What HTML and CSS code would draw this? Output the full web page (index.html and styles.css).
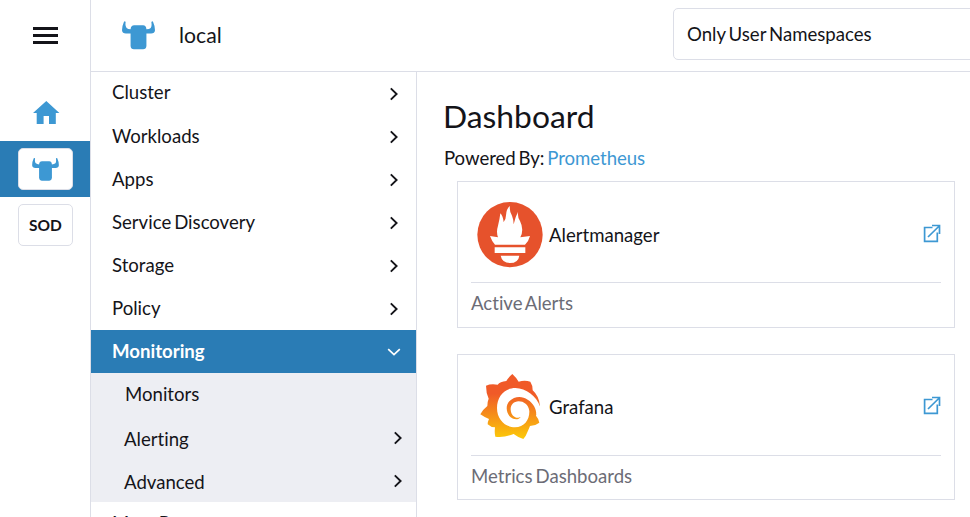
FILE: index.html
```html
<!DOCTYPE html>
<html lang="en">
<head>
<meta charset="utf-8">
<title>Monitoring</title>
<link rel="stylesheet" href="styles.css">
</head>
<body>
<svg class="defs" width="0" height="0">
  <symbol id="bull" viewBox="0 0 100 86"><path d="M26 37H12Q1 37 0 27Q0 14 6 1Q10 -2 11 3Q9 15 14 20Q18 24 26 24Q27 12 37 12H64Q73 12 74 24Q83 24 87 20Q91 15 89 3Q91 -2 94 1Q100 14 100 27Q99 37 88 37H74V75Q73 85 64 85H36Q27 85 26 75Z"/></symbol>
  <symbol id="right" viewBox="0 0 12 14"><path d="M2.8 1.4 8.6 7 2.8 12.6"/></symbol>
  <symbol id="down" viewBox="0 0 14 10"><path d="M1.2 2.2 7 7.7 12.8 2.2"/></symbol>
  <symbol id="external" viewBox="0 0 18 19"><path d="M9.5 3.5H1.6V17.4H14.3V8.5M9 1.5H16.5V10M16.2 2 5 13"/></symbol>
</svg>
<div class="app">
  <aside class="rail">
    <div class="burger"><i></i><i></i><i></i></div>
    <svg class="home" viewBox="0 0 27 24"><path d="M13.3 0 26.4 12H22.8V23H16V15H10.6V23H3.7V12H0Z"/></svg>
    <div class="active"><div class="box"><svg class="minibull"><use href="#bull"/></svg></div></div>
    <div class="box sod">SOD</div>
  </aside>
  <div class="body">
    <header class="top">
      <svg class="bull"><use href="#bull"/></svg>
      <span class="name">local</span>
      <div class="select">Only User Namespaces</div>
    </header>
    <div class="columns">
      <nav class="nav">
        <div class="row first"><span>Cluster</span><svg class="chev"><use href="#right"/></svg></div>
        <div class="row"><span>Workloads</span><svg class="chev"><use href="#right"/></svg></div>
        <div class="row"><span>Apps</span><svg class="chev"><use href="#right"/></svg></div>
        <div class="row"><span>Service Discovery</span><svg class="chev"><use href="#right"/></svg></div>
        <div class="row"><span>Storage</span><svg class="chev"><use href="#right"/></svg></div>
        <div class="row"><span>Policy</span><svg class="chev"><use href="#right"/></svg></div>
        <div class="row open"><span>Monitoring</span><svg class="chev-down"><use href="#down"/></svg></div>
        <div class="row sub leaf"><span>Monitors</span></div>
        <div class="row sub"><span>Alerting</span><svg class="chev"><use href="#right"/></svg></div>
        <div class="row sub"><span>Advanced</span><svg class="chev"><use href="#right"/></svg></div>
        <div class="row"><span>More Resources</span><svg class="chev"><use href="#right"/></svg></div>
      </nav>
      <main class="main">
        <h1>Dashboard</h1>
        <p class="powered">Powered By: <a>Prometheus</a></p>
        <section class="card">
          <div class="head">
            <svg class="logo prom" viewBox="21 31 198 201"><circle cx="120" cy="132" r="98" fill="#e6522c"/><g fill="#fff"><path d="M75 162Q66 153 60 136L84 140Q78 124 84 105Q89 86 91 68Q99 76 101 94Q108 86 108 74Q109 54 120 46Q117 60 126 75Q131 87 131 101Q136 78 144 63Q142 78 150 91Q163 117 151 140L180 136Q176 152 165 162Z"/><path d="M74 170H166V187H74ZM92 195H148Q145 217 120 217Q96 216 92 195Z"/></g></svg>
            <span class="title">Alertmanager</span><svg class="ext"><use href="#external"/></svg>
          </div>
          <div class="foot">Active Alerts</div>
        </section>
        <section class="card second">
          <div class="head">
            <svg class="logo graf" viewBox="21 25 198 201"><defs><linearGradient id="flame" x1="0" y1="225" x2="0" y2="28" gradientUnits="userSpaceOnUse"><stop offset="0" stop-color="#fccc08"/><stop offset=".7" stop-color="#f05a28"/></linearGradient></defs><path fill="url(#flame)" d="M127 28Q139 39 146 51Q164 46 181 51Q188 61 188 77Q207 94 210 124L199 149L198 153Q206 162 208 174Q197 183 180 184Q176 194 172 203Q168 215 160 223Q142 217 131 208Q105 219 76 216Q73 207 75 188Q62 188 53 179Q53 171 57 163Q42 157 31 149Q39 134 52 124Q52 111 56 102Q48 84 48 63Q63 56 83 60Q90 51 109 49Q116 37 127 28Z"/><path fill="#fff" d="M210 125C200 95 168 70 136 70C103 70 81 97 81 130C81 165 106 188 135 188C163 188 179 165 178 139C176 120 161 110 146 110C131 110 121 122 122 135C123 151 134 160 145 159L152 157C146 167 130 165 122 158C108 145 106 123 118 110C133 94 156 93 173 105C190 115 199 133 199 149H214Z"/></svg>
            <span class="title">Grafana</span><svg class="ext"><use href="#external"/></svg>
          </div>
          <div class="foot">Metrics Dashboards</div>
        </section>
      </main>
    </div>
  </div>
</div>
</body>
</html>
```
FILE: styles.css
```css
* { box-sizing: border-box; }
body { margin: 0; background: #fff; color: #141419; font: 18.6px/22px Lato, sans-serif; font-variant-ligatures: none; word-spacing: -1.8px; overflow: hidden; }
svg { display: block; flex: none; }
.defs { display: none; }
.app { display: flex; height: 517px; overflow: hidden; }
.rail { width: 91px; flex: none; border-right: 1px solid #dcdee7; }
.burger { width: 25px; margin: 27px 0 0 33px; display: grid; gap: 4px; }
.burger i { height: 3px; background: #141419; }
.home { width: 27px; height: 24px; margin: 57px 0 0 33px; fill: #3d98d3; }
.active { height: 56px; margin-top: 16px; padding: 7px 0 0 18px; background: #2a7cb5; }
.box { width: 55px; height: 42px; border: 1px solid #dcdee7; border-radius: 5px; background: #fff; display: flex; align-items: center; justify-content: center; }
.minibull { width: 27px; height: 23px; fill: #3d98d3; }
.sod { margin: 7px 0 0 18px; font-size: 15.5px; font-weight: 700; }
.body { flex: 1; min-width: 0; }
.top { height: 72px; display: flex; border-bottom: 1px solid #dcdee7; overflow: hidden; }
.bull { width: 33px; height: 29px; margin: 21px 0 0 31px; fill: #3d98d3; }
.name { margin: 24px 0 0 24px; width: 494px; flex: none; font-size: 21.2px; }
.select { width: 320px; height: 52px; flex: none; margin-top: 8px; padding: 14px 13px; border: 1px solid #dcdee7; border-radius: 5px; }
.columns { display: flex; height: 445px; }
.nav { width: 326px; flex: none; border-right: 1px solid #dcdee7; }
.row { height: 43px; padding: 0 16px 0 21px; display: flex; align-items: center; justify-content: space-between; }
.row span { margin-top: -2px; }
.row.first span { margin-top: -4px; }
.row.open { background: #2a7cb5; color: #fff; font-weight: 700; padding-right: 15px; }
.row.sub { background: #edeef3; padding: 0 12px 0 33px; }
.row.sub span { margin-top: 3px; }
.row.sub .chev { margin-top: 1px; }
.row.leaf { padding-left: 34px; }
.row.sub.leaf span { margin-top: -1px; }
.chev { width: 12px; height: 14px; fill: none; stroke: #141419; stroke-width: 1.9; }
.chev-down { width: 14px; height: 10px; fill: none; stroke: #fff; stroke-width: 1.7; }
.main { flex: 1; padding: 26px 15px 0 27px; }
h1 { margin: 0 0 0 -1px; font-size: 31.8px; line-height: 37px; font-weight: 400; }
.powered { margin: 12px 0 12px; letter-spacing: -0.05px; }
.powered a { color: #3d98d3; }
.card { height: 147px; margin-left: 13px; padding: 0 13px; border: 1px solid #dcdee7; }
.card.second { margin-top: 26px; height: 146px; }
.head { height: 101px; display: flex; align-items: center; border-bottom: 1px solid #dcdee7; }
.second .head { padding-bottom: 2px; }
.logo { width: 66px; height: 67px; margin: 5px 0 0 6px; }
.title { flex: 1; margin: 6px 0 0 6px; }
.ext { width: 18px; height: 19px; margin-top: 3px; fill: none; stroke: #3d98d3; stroke-width: 1.7; }
.foot { padding-top: 9px; color: #6c6c76; }
```
